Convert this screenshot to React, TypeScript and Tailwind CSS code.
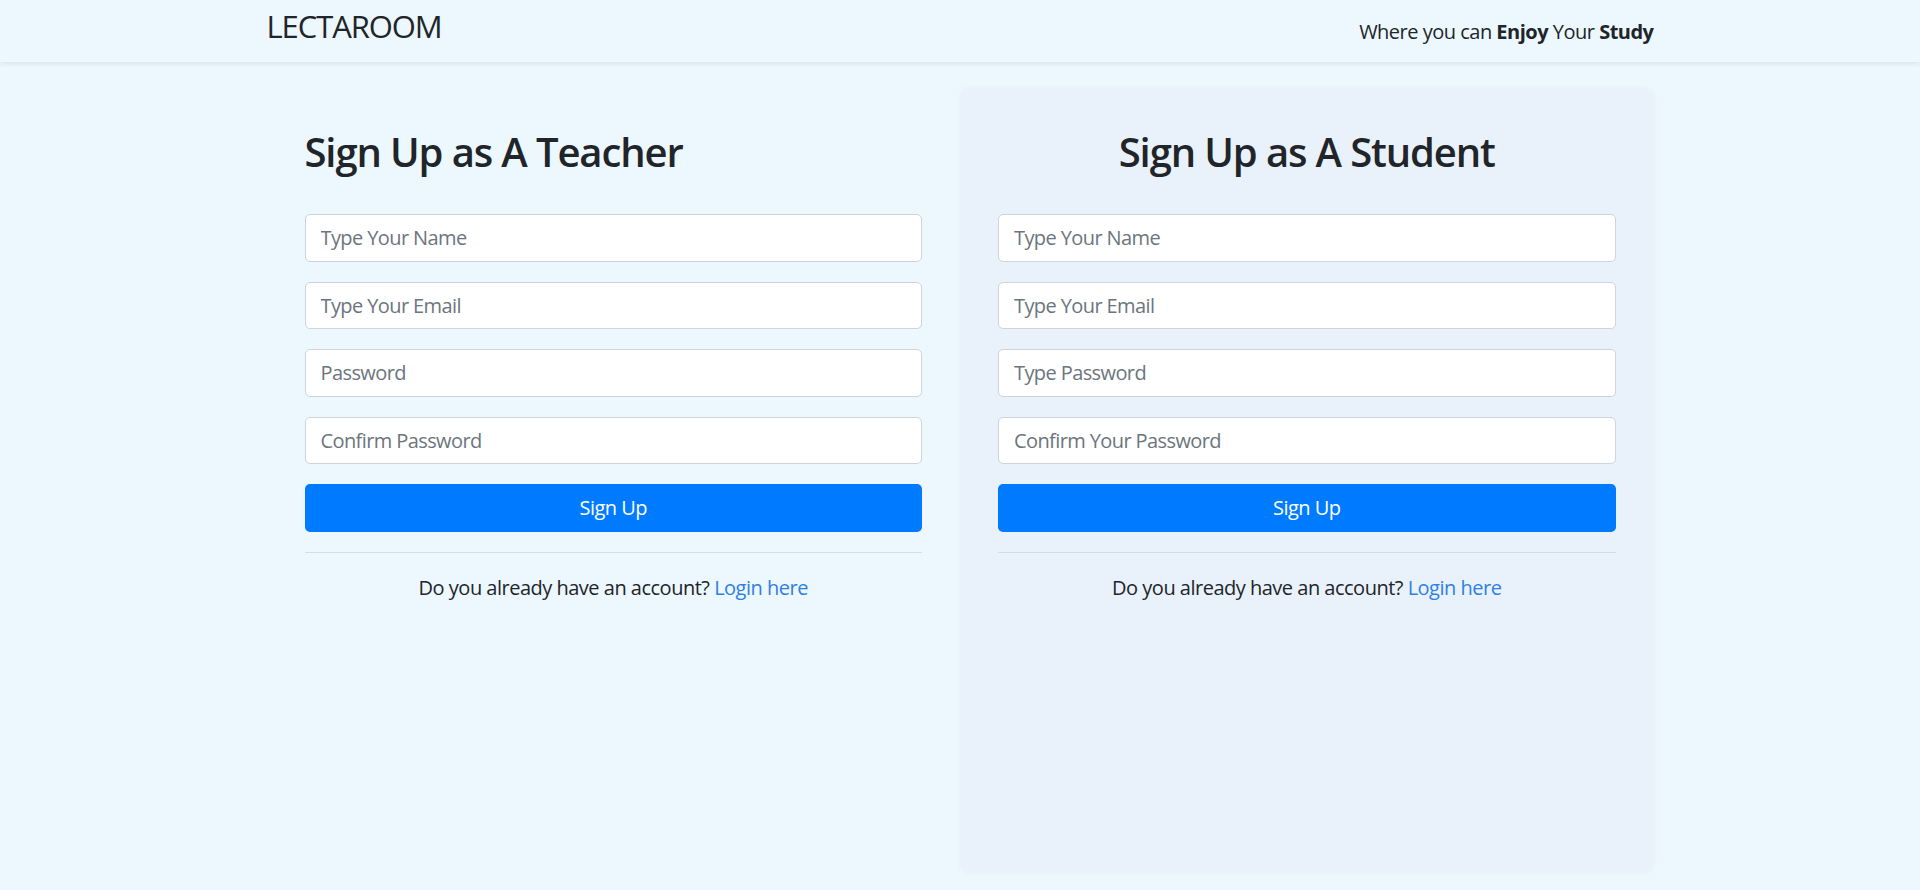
import React from 'react';

const font = { fontFamily: '"Segoe UI", "Open Sans", "Noto Sans", sans-serif' };

function Field({ placeholder, type = 'text' }: { placeholder: string; type?: string }) {
  return (
    <input
      type={type}
      placeholder={placeholder}
      className="block w-full h-[47.5px] mb-[20px] px-[15px] bg-white border border-[#ced4da] rounded-[5px] text-[20px] tracking-[-0.03em] text-[#495057] placeholder:text-[#6c757d] outline-none"
    />
  );
}

function SignupForm({ title, fields, centered }: { title: string; fields: [string, string][]; centered?: boolean }) {
  return (
    <div>
      <h2
        className={`text-[40px] leading-[48px] font-semibold tracking-[-0.028em] text-[#212529] mb-[38px] ${
          centered ? 'text-center' : ''
        }`}
      >
        {title}
      </h2>
      {fields.map(([p, t]) => (
        <Field key={p} placeholder={p} type={t} />
      ))}
      <button className="block w-full h-[47.5px] rounded-[5px] bg-[#007bff] text-white text-[20px] tracking-[-0.025em]">
        Sign Up
      </button>
      <hr className="mt-[20px] mb-[20px] border-t border-[#d5dde4]" />
      <p className="text-center text-[20px] leading-[30px] tracking-[-0.025em] text-[#212529]">
        Do you already have an account? <a href="#" className="text-[#2f80e4]">Login here</a>
      </p>
    </div>
  );
}

export default function App() {
  return (
    <div className="min-h-screen bg-[#ecf7fe]" style={font}>
      <nav className="h-[62px] bg-[#ecf7fe] shadow-[0_2px_5px_rgba(0,0,0,0.08)] relative">
        <div className="w-[1425px] mx-auto px-[19px] flex justify-between items-start">
          <span className="pt-[6px] text-[31px] leading-[40px] font-medium tracking-[-0.035em] text-[#212529]">LECTAROOM</span>
          <span className="pt-[20px] text-[20px] leading-[24px] tracking-[-0.025em] text-[#212529]">
            Where you can <b>Enjoy</b> Your <b>Study</b>
          </span>
        </div>
      </nav>
      <main className="w-[1425px] mx-auto px-[19px] pt-[26px]">
        <div className="grid grid-cols-2">
          <div className="pt-[40px] px-[38px]">
            <SignupForm
              title="Sign Up as A Teacher"
              fields={[
                ['Type Your Name', 'text'],
                ['Type Your Email', 'email'],
                ['Password', 'password'],
                ['Confirm Password', 'password'],
              ]}
            />
          </div>
          <div className="pt-[40px] px-[38px] h-[785px] bg-[#e9f2fb] rounded-[10px] shadow-[0_0_6px_rgba(0,0,0,0.03)]">
            <SignupForm
              centered
              title="Sign Up as A Student"
              fields={[
                ['Type Your Name', 'text'],
                ['Type Your Email', 'email'],
                ['Type Password', 'password'],
                ['Confirm Your Password', 'password'],
              ]}
            />
          </div>
        </div>
      </main>
    </div>
  );
}
